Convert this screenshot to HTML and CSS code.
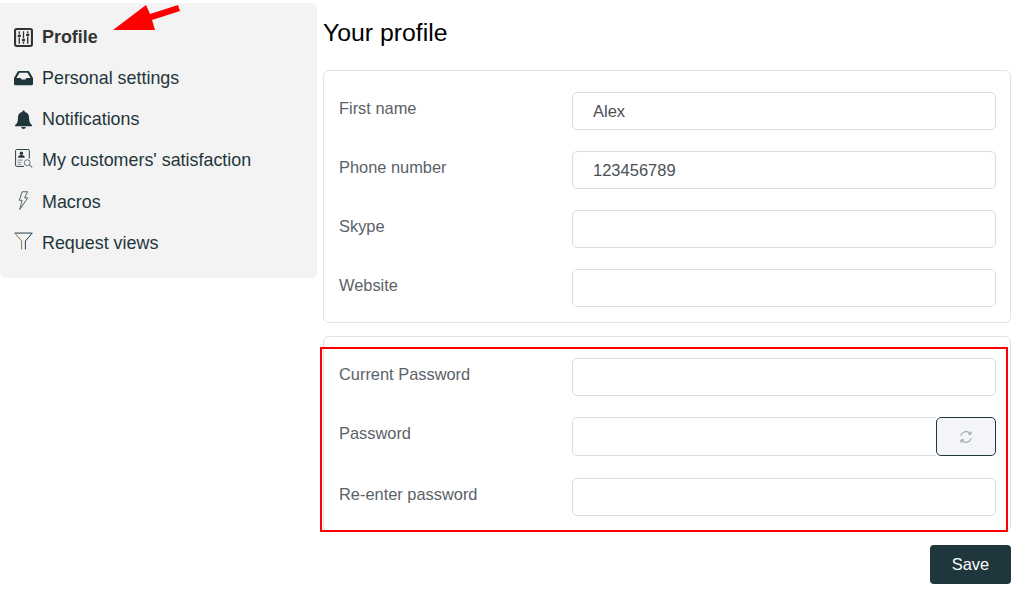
FILE: index.html
```html
<!DOCTYPE html>
<html lang="en">
<head>
    <meta charset="UTF-8">
    <title>Your profile</title>
    <link rel="stylesheet" href="styles.css">
</head>
<body>
    <div class="page">
        <div class="sidebar">
            <a class="side-item active">
                <svg class="side-icon" viewBox="0 0 18 18" fill="none" stroke="currentColor" stroke-width="1.3">
                    <rect x="1" y="1" width="16" height="16" rx="1.5" stroke-width="2"/>
                    <path d="M5 3v3M5 9v6M9 3v7M9 13v2M13 3v2M13 8v7"/>
                    <path d="M3.500 7.500h3M7.500 11.500h3M11.500 6.500h3" stroke-width="2"/>
                </svg>
                Profile
            </a>
            <a class="side-item">
                <svg class="side-icon" viewBox="0 0 18 18" fill="currentColor">
                    <path fill-rule="evenodd" d="M4.500 2h9c.5 0 .9.2 1.100.6L18 8.500V14a1.500 1.500 0 0 1-1.500 1.500h-15A1.500 1.500 0 0 1 0 14V8.500L3.400 2.600C3.600 2.200 4 2 4.500 2zM5.200 3.500 2.300 8.500H6.300l1 1.500h3.400l1-1.500h4L12.800 3.500z"/>
                </svg>
                Personal settings
            </a>
            <a class="side-item">
                <svg class="side-icon" viewBox="0 0 18 18" fill="currentColor">
                    <path d="M9 .5c.8 0 1.300.6 1.300 1.400C13 2.500 14.300 4.700 14.300 7.500c0 3.500.8 5 2.700 6.800.3.400.1 1-.5 1h-15c-.6 0-.8-.6-.5-1C3.400 12.500 3.700 11 3.700 7.500c0-2.800 1.300-5 4-5.600C7.700 1.100 8.200.5 9 .5zM6.800 16.200h4.400C11 17.300 10.100 18 9 18s-2-.7-2.200-1.800z"/>
                </svg>
                Notifications
            </a>
            <a class="side-item">
                <svg class="side-icon icon-up" viewBox="0 0 18 18" fill="none" stroke="currentColor" stroke-width=".9">
                    <path d="M14.500 9V1.500a1 1 0 0 0-1-1h-11a1 1 0 0 0-1 1v14a1 1 0 0 0 1 1h7"/>
                    <circle cx="7" cy="4" r="1.600" fill="currentColor" stroke="none"/>
                    <path d="M3.800 8.300c0-1.800 1.400-2.500 3.200-2.500s3.200.7 3.200 2.500z" fill="currentColor" stroke="none"/>
                    <path d="M3.500 10.500h5M3.500 12.500h3.500M3.500 14.500h3.500" stroke="#7d8a8e"/>
                    <circle cx="12.500" cy="13" r="2.800" stroke="#5f7076"/>
                    <path d="M14.500 15l2.800 2.500"/>
                </svg>
                My customers' satisfaction
            </a>
            <a class="side-item">
                <svg class="side-icon icon-up" viewBox="0 0 18 18" fill="none" stroke="#4c5d63" stroke-width=".9">
                    <path d="M7.800 .7h5L10 6.500h3L5.500 17.500l2.200-8.700H5z"/>
                </svg>
                Macros
            </a>
            <a class="side-item">
                <svg class="side-icon icon-up" viewBox="0 0 18 18" fill="none" stroke="currentColor" stroke-width=".9">
                    <path d="M.7 1h16.600l-6.500 7.500v8"/>
                    <path d="M.7 1l6.500 7.500v8" stroke="#8a6a4a"/>
                </svg>
                Request views
            </a>
        </div>

        <div class="main">
            <h1 class="title">Your profile</h1>

            <div class="card">
                <div class="form-row">
                    <label>First name</label>
                    <input class="field" type="text" value="Alex">
                </div>
                <div class="form-row">
                    <label>Phone number</label>
                    <input class="field" type="text" value="123456789">
                </div>
                <div class="form-row">
                    <label>Skype</label>
                    <input class="field" type="text">
                </div>
                <div class="form-row">
                    <label>Website</label>
                    <input class="field" type="text">
                </div>
            </div>

            <div class="card card-password">
                <div class="form-row">
                    <label>Current Password</label>
                    <input class="field" type="text">
                </div>
                <div class="form-row row-tall">
                    <label>Password</label>
                    <div class="field-group">
                        <input class="field" type="text">
                        <button class="refresh-button" type="button">
                            <svg viewBox="0 0 16 16" width="14" height="14" fill="none" stroke="#7d858c" stroke-width="1">
                                <path d="M2 6.500A6.200 6.200 0 0 1 13 4.300"/>
                                <path d="M14 9.500A6.200 6.200 0 0 1 3 11.700"/>
                                <path d="M13.600 1.500v3.200h-3.200M2.400 14.500v-3.200h3.200"/>
                            </svg>
                        </button>
                    </div>
                </div>
                <div class="form-row">
                    <label>Re-enter password</label>
                    <input class="field" type="text">
                </div>
            </div>

            <div class="actions">
                <button class="save-button" type="button">Save</button>
            </div>
        </div>
    </div>

    <!-- annotations drawn over the screenshot -->
    <svg class="arrow" viewBox="0 0 72 32" width="72" height="32">
        <path d="M3 28 36 3 40 12 68 3 70 9 42 18 45 28z" fill="#ff0000"/>
    </svg>
    <div class="red-frame"></div>
</body>
</html>
```

FILE: styles.css
```css
html, body {
    margin: 0;
    padding: 0;
}
body {
    font-family: "Liberation Sans", Arial, sans-serif;
    background-color: white;
    position: relative;
    height: 605px;
    overflow: hidden;
}
.page {
    display: flex;
    align-items: flex-start;
    gap: 6px;
    padding-top: 3px;
}
.sidebar {
    width: 317px;
    height: 275px;
    box-sizing: border-box;
    background-color: #f3f3f3;
    border-radius: 0 5px 5px 5px;
    padding-top: 14px;
    flex-shrink: 0;
}
.side-item {
    display: flex;
    align-items: center;
    gap: 9px;
    height: 41.15px;
    padding-left: 14px;
    font-size: 17.9px;
    color: #1f363d;
}
.side-item.active {
    font-weight: bold;
    color: #333333;
}
.side-icon {
    width: 19px;
    height: 19px;
    flex-shrink: 0;
}
.icon-up {
    margin-top: -4px;
}
.main {
    width: 688px;
}
.title {
    font-size: 24.8px;
    font-weight: normal;
    color: #000;
    margin: 0;
    height: 67px;
    line-height: 59px;
}
.card {
    border: 1px solid #e0e0e8;
    border-radius: 6px;
    padding: 21px 14px 15px 15px;
    margin-bottom: 13px;
}
.form-row {
    display: flex;
    margin-bottom: 21px;
}
.form-row:last-child {
    margin-bottom: 0;
}
.row-tall {
    margin-bottom: 22px;
}
.form-row label {
    width: 233px;
    flex-shrink: 0;
    font-size: 16.4px;
    line-height: 18px;
    padding-top: 7px;
    color: #5a6268;
}
.field {
    flex: 1;
    min-width: 0;
    height: 38px;
    box-sizing: border-box;
    border: 1px solid #dcdee6;
    border-radius: 5px;
    padding: 0 20px;
    font-family: inherit;
    font-size: 16.5px;
    color: #495057;
    background: white;
}
.field-group {
    flex: 1;
    display: flex;
}
.field-group .field {
    height: 39px;
    border-radius: 5px 0 0 5px;
    border-right: none;
}
.refresh-button {
    width: 60px;
    height: 39px;
    background-color: #f3f5f9;
    border: 1px solid #1f363d;
    border-radius: 5px;
    display: flex;
    align-items: center;
    justify-content: center;
    padding: 0;
}
.actions {
    display: flex;
    justify-content: flex-end;
}
.save-button {
    width: 81px;
    height: 39px;
    background-color: #1f363d;
    color: white;
    border: none;
    border-radius: 4px;
    font-family: inherit;
    font-size: 16.4px;
}
.arrow {
    position: absolute;
    left: 110px;
    top: 2px;
}
.red-frame {
    position: absolute;
    left: 320px;
    top: 347px;
    width: 684px;
    height: 181px;
    border: 2px solid #ff0000;
}
```
